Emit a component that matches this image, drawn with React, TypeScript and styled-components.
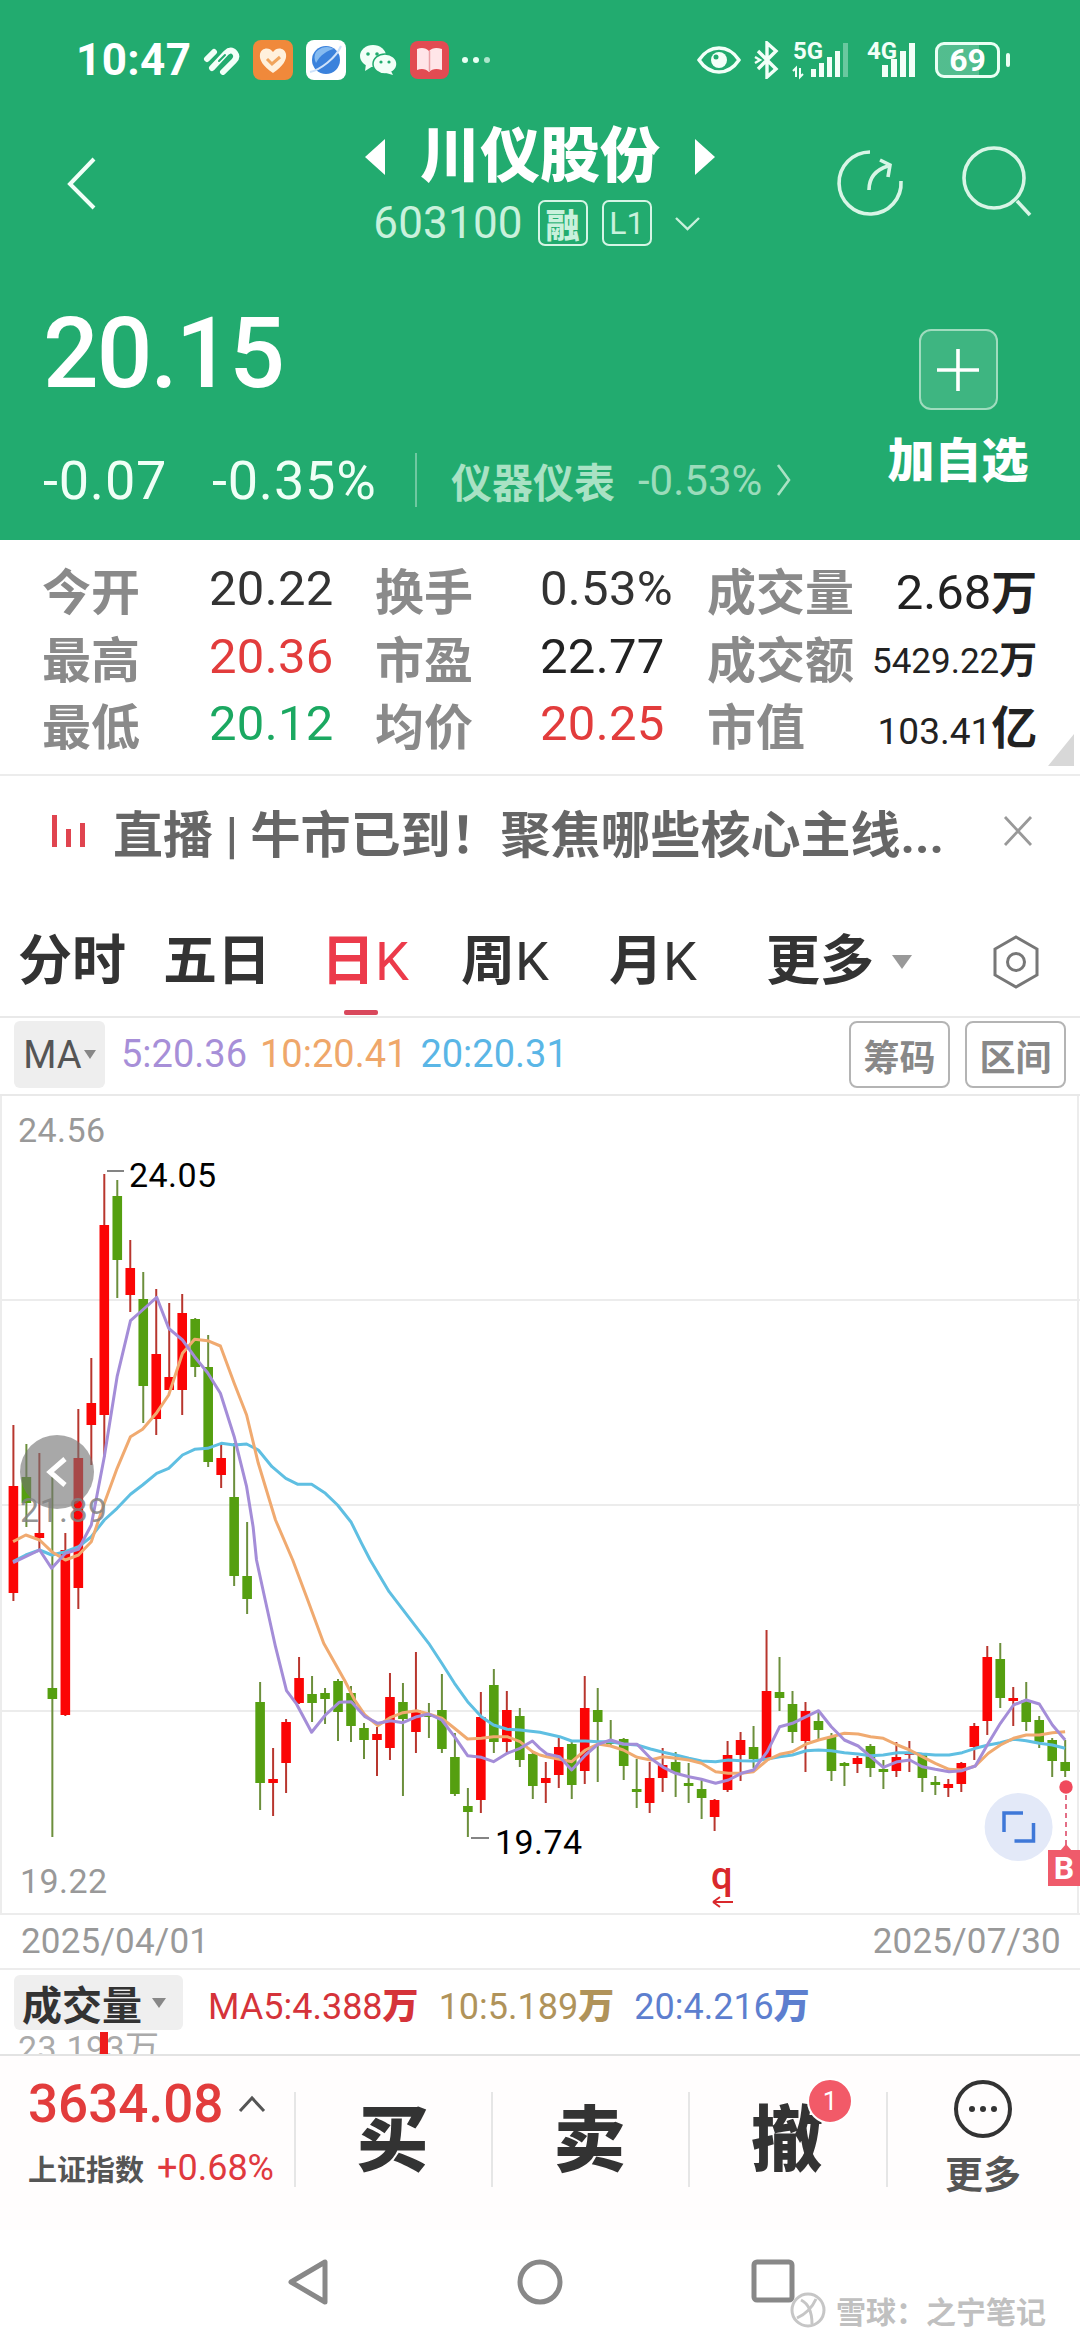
import styled, { createGlobalStyle } from "styled-components";

const GlobalStyle = createGlobalStyle`
  html, body {
    margin: 0;
    padding: 0;
    width: 1080px;
    background: #fff;
  }
  * { box-sizing: border-box; }
  body {
    font-family: Roboto, "Noto Sans CJK SC", sans-serif;
  }
`;

const Page = styled.div`
  width: 1080px;
  height: 2340px;
  overflow: hidden;
  display: flex;
  flex-direction: column;
  background: #fff;
  position: relative;
`;

/* header */
const Header = styled.header`
  height: 540px;
  background: #22ab6f;
  color: #fff;
  flex: none;
`;

const StatusBar = styled.div`
  height: 116px;
  padding: 40px 80px 0 76px;
  display: flex;
  align-items: flex-start;
  justify-content: space-between;
`;

const StatusGroup = styled.div<{ $gap: number }>`
  height: 40px;
  display: flex;
  align-items: center;
  gap: ${(p) => p.$gap}px;
`;

const Clock = styled.span`
  font-size: 44px;
  font-weight: 700;
  letter-spacing: 0.4px;
  width: 114px;
  white-space: nowrap;
`;

const Battery = styled.div`
  position: relative;
  width: 65px;
  height: 36px;
  border: 3px solid #eafff4;
  border-radius: 9px;
  background: linear-gradient(90deg, rgba(255, 255, 255, 0.22) 69%, transparent 69%);
  font-size: 32px;
  font-weight: 700;
  line-height: 30px;
  text-align: center;
  &::after {
    content: "";
    position: absolute;
    right: -13px;
    top: 8px;
    width: 4px;
    height: 14px;
    border-radius: 2px;
    background: #eafff4;
  }
`;

const TitleBar = styled.div`
  height: 134px;
  display: grid;
  grid-template-columns: 1fr auto 1fr;
  align-items: center;
`;

const BackWrap = styled.div`
  padding-left: 67px;
  display: flex;
`;

const TitleBlock = styled.div`
  display: flex;
  flex-direction: column;
  align-items: center;
`;

const TitleLine = styled.div`
  height: 76px;
  padding-top: 6px;
  display: flex;
  align-items: center;
  gap: 35px;
`;

const StockName = styled.h1`
  margin: 0;
  font-size: 60px;
  font-weight: 900;
  line-height: 70px;
  white-space: nowrap;
`;

const CodeLine = styled.div`
  height: 58px;
  padding: 4px 6px 0 0;
  display: flex;
  align-items: center;
  color: #c9f1dc;
`;

const CodeText = styled.span`
  font-size: 44px;
  letter-spacing: 0.2px;
  margin-right: 15px;
`;

const Tag = styled.span`
  width: 50px;
  height: 46px;
  border: 2px solid #d6f5e5;
  border-radius: 7px;
  margin-right: 14px;
  display: flex;
  align-items: center;
  justify-content: center;
  font-size: 34px;
  font-weight: 900;
`;

const TagLight = styled(Tag)`
  font-weight: 400;
  font-size: 32px;
  margin-right: 22px;
`;

const ActionIcons = styled.div`
  display: flex;
  justify-content: flex-end;
  align-items: center;
  gap: 55px;
  padding-right: 45px;
`;

const QuoteRow = styled.div`
  height: 290px;
  display: flex;
  justify-content: space-between;
`;

const QuoteLeft = styled.div`
  padding: 54px 0 0 43px;
`;

const Price = styled.div`
  font-size: 98px;
  line-height: 100px;
  font-weight: 500;
  letter-spacing: -2px;
`;

const ChangeRow = styled.div`
  margin-top: 48px;
  height: 56px;
  display: flex;
  align-items: center;
`;

const ChangeValue = styled.span<{ $w: number }>`
  width: ${(p) => p.$w}px;
  font-size: 54px;
  letter-spacing: 0.8px;
  color: #effff6;
  white-space: nowrap;
`;

const VSep = styled.span`
  width: 2px;
  height: 54px;
  background: rgba(255, 255, 255, 0.35);
  margin: 0 34px 0 37px;
`;

const Sector = styled.span`
  font-size: 41px;
  font-weight: 700;
  color: #a9e2c4;
  margin-right: 23px;
  white-space: nowrap;
`;

const SectorChange = styled.span`
  font-size: 42px;
  color: #9bdcbb;
  margin-right: 14px;
  white-space: nowrap;
`;

const QuoteRight = styled.div`
  width: 140px;
  margin-right: 52px;
  display: flex;
  flex-direction: column;
  align-items: center;
  padding-top: 79px;
`;

const PlusButton = styled.div`
  width: 79px;
  height: 81px;
  border: 2px solid #9fdcbe;
  border-radius: 12px;
  background: rgba(255, 255, 255, 0.13);
  display: flex;
  align-items: center;
  justify-content: center;
`;

const PlusLabel = styled.div`
  margin-top: 28px;
  font-size: 47px;
  line-height: 46px;
  font-weight: 900;
  white-space: nowrap;
`;

/* stats */
const Stats = styled.section`
  position: relative;
  flex: none;
  height: 236px;
  padding: 15px 43px 0 42px;
  border-bottom: 2px solid #ececec;
  display: grid;
  grid-template-columns: 167px 166px 165px 167px 165px 1fr;
  grid-auto-rows: 67.5px;
  align-items: center;
  &::after {
    content: "";
    position: absolute;
    right: 6px;
    bottom: 8px;
    border-style: solid;
    border-width: 0 0 32px 26px;
    border-color: transparent transparent #d8d8d8 transparent;
  }
`;

const StatLabel = styled.span`
  font-size: 49px;
  font-weight: 700;
  color: #8a8a8a;
  white-space: nowrap;
`;

const StatValue = styled.span<{ $color?: string }>`
  font-size: 49px;
  letter-spacing: 0.3px;
  color: ${(p) => p.$color || "#333"};
  white-space: nowrap;
`;

const StatEnd = styled.span<{ $size: number; $unit: number }>`
  font-size: ${(p) => p.$size}px;
  color: #222;
  text-align: right;
  white-space: nowrap;
  b {
    font-weight: 700;
    font-size: ${(p) => p.$unit}px;
  }
`;

/* live strip */
const LiveBar = styled.div`
  flex: none;
  height: 114px;
  padding: 0 47px 4px 50px;
  display: flex;
  align-items: center;
`;

const LiveText = styled.span`
  margin-left: 27px;
  font-size: 50px;
  font-weight: 700;
  color: #666;
  white-space: nowrap;
  flex: 1;
`;

/* tabs */
const Tabs = styled.nav`
  flex: none;
  height: 126px;
  padding: 18px 40px 0 18px;
  display: grid;
  grid-template-columns: 145px 158px 140px 148px 157px auto 1fr;
  align-items: center;
`;

const Tab = styled.div<{ $active?: boolean }>`
  position: relative;
  font-size: 54px;
  line-height: 60px;
  color: ${(p) => (p.$active ? "#ec3b4b" : "#333")};
  white-space: nowrap;
  b {
    font-weight: 700;
  }
  ${(p) =>
    p.$active
      ? `&::after {
    content: "";
    position: absolute;
    left: 23px;
    top: 78px;
    width: 34px;
    height: 5px;
    border-radius: 2px;
    background: #d9485c;
  }`
      : ""}
`;

const MoreTab = styled(Tab)`
  display: flex;
  align-items: center;
  gap: 18px;
`;

const Caret = styled.i<{ $w: number; $color: string }>`
  display: inline-block;
  border-style: solid;
  border-width: ${(p) => p.$w}px ${(p) => p.$w * 0.75}px 0 ${(p) => p.$w * 0.75}px;
  border-color: ${(p) => p.$color} transparent transparent transparent;
`;

const TabIcon = styled.div`
  display: flex;
  justify-content: flex-end;
`;

/* MA row */
const IndicatorRow = styled.div`
  flex: none;
  height: 80px;
  padding: 3px 14px 0 14px;
  border-top: 2px solid #e9e9e9;
  border-bottom: 2px solid #e9e9e9;
  display: flex;
  align-items: flex-start;
`;

const MaChip = styled.div`
  width: 91px;
  height: 67px;
  border-radius: 6px;
  background: #eeeeee;
  color: #555;
  font-size: 38px;
  display: flex;
  align-items: center;
  justify-content: center;
  gap: 2px;
  margin-right: 16px;
`;

const MaValue = styled.span<{ $color: string }>`
  height: 67px;
  line-height: 67px;
  margin-right: 13px;
  font-size: 38px;
  color: ${(p) => p.$color};
  white-space: nowrap;
`;

const OutlineButton = styled.div`
  width: 101px;
  height: 67px;
  border: 2px solid #b4b4b4;
  border-radius: 8px;
  color: #888;
  font-size: 36px;
  font-weight: 700;
  display: flex;
  align-items: center;
  justify-content: center;
`;

const FirstOutline = styled(OutlineButton)`
  margin-left: auto;
  margin-right: 15px;
`;

/* chart */
const ChartArea = styled.div`
  position: relative;
  flex: none;
  height: 819px;
  overflow: hidden;
  svg {
    display: block;
  }
`;

const ChartLabel = styled.span<{ $x: number; $y: number; $color: string }>`
  position: absolute;
  left: ${(p) => p.$x}px;
  top: ${(p) => p.$y - 1096}px;
  font-size: 34px;
  line-height: 36px;
  letter-spacing: 0.4px;
  color: ${(p) => p.$color};
`;

const SignalMark = styled(ChartLabel)`
  font-size: 38px;
  font-weight: 500;
`;

const ScrollKnob = styled.div`
  position: absolute;
  left: 20px;
  top: 339px;
  width: 74px;
  height: 74px;
  border-radius: 50%;
  background: rgba(115, 115, 115, 0.62);
  display: flex;
  align-items: center;
  justify-content: center;
`;

const BuyMark = styled.div`
  position: absolute;
  right: 0;
  top: 754px;
  width: 32px;
  height: 36px;
  background: #ef5b6b;
  color: #fff;
  font-size: 32px;
  font-weight: 700;
  line-height: 36px;
  text-align: center;
`;

const DateRow = styled.div`
  flex: none;
  height: 53px;
  padding: 0 19px 0 21px;
  display: flex;
  align-items: center;
  justify-content: space-between;
  font-size: 35px;
  letter-spacing: 0.2px;
  color: #999;
`;

/* volume */
const VolumeBlock = styled.div`
  position: relative;
  flex: none;
  height: 86px;
  overflow: hidden;
  padding: 5px 14px 0;
  border-top: 2px solid #ececec;
`;

const VolumeHead = styled.div`
  display: flex;
  align-items: center;
  height: 55px;
`;

const VolumeChip = styled.div`
  width: 169px;
  height: 55px;
  padding-left: 8px;
  border-radius: 6px;
  background: #efefef;
  color: #333;
  font-size: 40px;
  font-weight: 700;
  display: flex;
  align-items: center;
  gap: 10px;
  margin-right: 25px;
  white-space: nowrap;
`;

const VolumeValue = styled.span<{ $color: string }>`
  font-size: 36px;
  margin-right: 20px;
  color: ${(p) => p.$color};
  white-space: nowrap;
  b {
    font-weight: 900;
  }
`;

const VolumeTop = styled.div`
  padding-left: 4px;
  margin-top: -2px;
  font-size: 34px;
  line-height: 40px;
  letter-spacing: 0.4px;
  color: #aaa;
`;

const VolumeBar = styled.i`
  position: absolute;
  left: 100px;
  top: 62px;
  width: 8px;
  height: 24px;
  background: #ef1c1c;
`;

/* trade bar */
const TradeBar = styled.div`
  flex: none;
  height: 176px;
  border-top: 2px solid #e3e3e3;
  background: #fffdfd;
  display: grid;
  grid-template-columns: 294px 197px 197px 198px 194px;
`;

const TradeCell = styled.div<{ $divider?: boolean }>`
  position: relative;
  display: flex;
  align-items: center;
  justify-content: center;
  &::before {
    content: ${(p) => (p.$divider ? '""' : "none")};
    position: absolute;
    left: 0;
    top: 36px;
    width: 2px;
    height: 95px;
    background: #e6e6e6;
  }
`;

const TradeGlyph = styled.span`
  position: relative;
  margin-top: -4px;
  font-size: 72px;
  font-weight: 900;
  color: #333;
  line-height: 80px;
`;

const Badge = styled.span`
  position: absolute;
  top: -23px;
  right: -30px;
  width: 46px;
  height: 46px;
  border: 2px solid #fff;
  border-radius: 50%;
  background: #f25a68;
  color: #fff;
  font-size: 26px;
  font-weight: 400;
  line-height: 42px;
  text-align: center;
`;

const IndexCell = styled.div`
  padding: 24px 0 0 28px;
`;

const IndexLine = styled.div`
  display: flex;
  align-items: center;
  height: 48px;
`;

const IndexPrice = styled.span`
  font-size: 53px;
  font-weight: 500;
  color: #e23c3c;
  margin-right: 15px;
`;

const IndexSub = styled.div`
  margin-top: 21px;
  display: flex;
  align-items: center;
  height: 38px;
  white-space: nowrap;
`;

const IndexName = styled.span`
  width: 129px;
  font-size: 29px;
  font-weight: 700;
  color: #555;
`;

const IndexChange = styled.span`
  font-size: 36px;
  color: #e0393e;
`;

const MoreCell = styled(TradeCell)`
  flex-direction: column;
  justify-content: flex-start;
  padding-top: 23px;
`;

const MoreLabel = styled.span`
  margin-top: 15px;
  font-size: 38px;
  line-height: 42px;
  font-weight: 700;
  color: #555;
`;

/* system nav */
const SystemNav = styled.div`
  position: relative;
  flex: 1;
  padding: 29px 0 0 287px;
  background: #fff;
  display: flex;
  align-items: flex-start;
  gap: 188px;
`;

const Watermark = styled.div`
  position: absolute;
  left: 790px;
  top: 58px;
  display: flex;
  align-items: center;
  gap: 10px;
  font-size: 30px;
  font-weight: 700;
  color: #c0c0c0;
  text-shadow: 0 0 2px #fff;
  white-space: nowrap;
`;

type Candle = [number, number, number, number, number];

// wick top, body top, body bottom, wick bottom, 1 = red
const candles: Candle[] = [
  [1425, 1486, 1593, 1601, 1], [1444, 1477, 1503, 1527, 0], [1453, 1533, 1538, 1550, 1], [1477, 1688, 1699, 1837, 0],
  [1533, 1550, 1715, 1716, 1], [1409, 1458, 1588, 1609, 1], [1358, 1403, 1425, 1465, 1], [1174, 1225, 1415, 1457, 1],
  [1180, 1196, 1260, 1298, 0], [1240, 1268, 1295, 1312, 1], [1272, 1299, 1386, 1423, 0], [1289, 1354, 1419, 1435, 1],
  [1303, 1377, 1390, 1390, 1], [1294, 1313, 1390, 1415, 1], [1318, 1319, 1367, 1377, 0], [1335, 1367, 1462, 1467, 0],
  [1445, 1458, 1475, 1488, 1], [1443, 1497, 1576, 1586, 0], [1522, 1576, 1599, 1614, 0], [1682, 1702, 1783, 1810, 0],
  [1748, 1779, 1783, 1816, 1], [1719, 1722, 1763, 1793, 1], [1657, 1678, 1703, 1704, 1], [1676, 1694, 1703, 1722, 0],
  [1688, 1693, 1699, 1724, 0], [1679, 1681, 1712, 1741, 0], [1686, 1693, 1726, 1742, 0], [1723, 1728, 1740, 1759, 0],
  [1727, 1734, 1740, 1776, 1], [1673, 1697, 1748, 1760, 1], [1683, 1702, 1719, 1796, 0], [1652, 1710, 1732, 1753, 1],
  [1703, 1714, 1716, 1738, 0], [1674, 1710, 1749, 1753, 0], [1733, 1757, 1794, 1796, 0], [1788, 1806, 1812, 1837, 0],
  [1692, 1717, 1800, 1813, 1], [1669, 1685, 1742, 1753, 0], [1691, 1710, 1742, 1753, 1], [1708, 1716, 1760, 1767, 0],
  [1752, 1754, 1786, 1799, 0], [1762, 1778, 1783, 1803, 1], [1738, 1747, 1775, 1788, 1], [1740, 1744, 1785, 1799, 0],
  [1676, 1708, 1771, 1784, 1], [1688, 1710, 1722, 1782, 0], [1720, 1741, 1743, 1747, 0], [1738, 1739, 1766, 1780, 0],
  [1759, 1789, 1792, 1808, 0], [1762, 1778, 1803, 1813, 1], [1748, 1765, 1778, 1792, 1], [1752, 1762, 1773, 1797, 0],
  [1763, 1783, 1784, 1803, 0], [1778, 1789, 1798, 1819, 0], [1799, 1800, 1817, 1831, 1], [1741, 1755, 1790, 1792, 1],
  [1732, 1740, 1755, 1781, 1], [1726, 1747, 1759, 1768, 0], [1630, 1691, 1758, 1759, 1], [1657, 1692, 1698, 1711, 0],
  [1691, 1704, 1732, 1743, 0], [1702, 1711, 1741, 1772, 1], [1710, 1721, 1730, 1740, 0], [1733, 1737, 1771, 1781, 0],
  [1762, 1763, 1765, 1786, 0], [1756, 1758, 1764, 1773, 1], [1744, 1746, 1768, 1777, 0], [1760, 1769, 1771, 1789, 0],
  [1742, 1757, 1771, 1777, 1], [1741, 1752, 1753, 1772, 1], [1753, 1755, 1778, 1792, 0], [1776, 1782, 1785, 1795, 0],
  [1779, 1784, 1788, 1797, 1], [1762, 1763, 1784, 1792, 1], [1723, 1726, 1747, 1760, 1], [1646, 1657, 1721, 1735, 1],
  [1643, 1659, 1698, 1708, 0], [1687, 1698, 1699, 1726, 1], [1682, 1700, 1722, 1731, 0], [1716, 1720, 1742, 1748, 0],
  [1738, 1740, 1761, 1777, 0], [1740, 1762, 1771, 1777, 0],
];

const candleX = (i: number) => 13.4 + 12.985 * i;

// line points read off the reference in three crops
const toLine = (a: number[], b: number[], c: number[]) => {
  const out: string[] = [];
  for (let i = 0; i < a.length; i += 2) out.push(`${(a[i] / 2.904).toFixed(1)},${(1090 + a[i + 1] / 3).toFixed(1)}`);
  for (let i = 0; i < b.length; i += 2) out.push(`${(b[i] / 2.904).toFixed(1)},${(1560 + b[i + 1] / 3).toFixed(1)}`);
  for (let i = 0; i < c.length; i += 2) out.push(`${(540 + c[i] / 2.904).toFixed(1)},${(1560 + c[i + 1] / 3).toFixed(1)}`);
  return out.join(" ");
};

const ma5 = toLine(
  [38, 1418, 115, 1380, 150, 1435, 190, 1390, 228, 1378, 265, 1305, 303, 1100, 340, 860, 379, 692, 414, 660, 455, 622, 490, 715, 530, 750, 565, 800, 603, 848, 640, 910, 680, 1040, 716, 1190, 735, 1310],
  [745, 0, 770, 120, 800, 260, 832, 392, 860, 430, 905, 517, 945, 465, 985, 427, 1020, 425, 1060, 470, 1097, 490, 1135, 482, 1170, 488, 1210, 470, 1245, 462, 1283, 480, 1320, 530, 1358, 587, 1398, 592, 1433, 605, 1473, 580, 1510, 565, 1546, 543, 1568, 565],
  [20, 582, 57, 590, 92, 630, 132, 585, 168, 553, 205, 540, 242, 552, 282, 553, 321, 595, 358, 622, 394, 640, 432, 650, 469, 658, 510, 670, 547, 660, 585, 640, 620, 630, 660, 575, 696, 500, 733, 490, 773, 470, 809, 452, 846, 500, 884, 540, 924, 558, 960, 590, 997, 622, 1038, 605, 1074, 600, 1110, 620, 1148, 628, 1188, 635, 1226, 632, 1264, 618, 1302, 550, 1337, 490, 1375, 435, 1412, 420, 1450, 432, 1488, 495, 1525, 540]
);

const ma10 = toLine(
  [38, 1355, 75, 1335, 115, 1350, 150, 1385, 190, 1410, 228, 1395, 265, 1355, 303, 1240, 340, 1135, 379, 1040, 414, 1018, 455, 968, 490, 915, 530, 790, 565, 748, 603, 752, 640, 768, 680, 880, 716, 975, 750, 1120, 800, 1290],
  [850, 0, 890, 110, 940, 250, 1000, 360, 1030, 420, 1060, 465, 1097, 497, 1135, 472, 1170, 458, 1210, 452, 1245, 462, 1283, 475, 1320, 505, 1358, 537, 1398, 535, 1433, 530, 1473, 530, 1510, 545, 1546, 575, 1568, 585],
  [20, 590, 57, 598, 92, 605, 132, 570, 168, 552, 205, 558, 242, 570, 282, 592, 321, 600, 358, 590, 394, 595, 432, 600, 469, 610, 510, 635, 547, 640, 585, 640, 620, 635, 660, 600, 696, 583, 733, 575, 773, 552, 809, 540, 846, 530, 884, 520, 924, 522, 960, 530, 997, 535, 1038, 555, 1074, 570, 1110, 590, 1148, 610, 1188, 628, 1226, 630, 1264, 618, 1302, 580, 1337, 555, 1375, 535, 1412, 525, 1450, 525, 1488, 518, 1525, 515]
);

const ma20 = toLine(
  [38, 1415, 75, 1395, 115, 1380, 150, 1395, 190, 1385, 228, 1370, 265, 1340, 303, 1290, 340, 1255, 379, 1213, 414, 1185, 455, 1150, 490, 1135, 530, 1095, 565, 1078, 603, 1075, 643, 1060, 680, 1065, 716, 1062, 750, 1080, 790, 1130, 830, 1165, 865, 1183, 905, 1183, 945, 1210, 980, 1245, 1020, 1297, 1050, 1360],
  [1075, 0, 1130, 95, 1245, 250, 1283, 310, 1320, 370, 1358, 425, 1398, 470, 1433, 495, 1473, 508, 1510, 510, 1568, 517],
  [57, 530, 92, 543, 132, 543, 168, 545, 205, 545, 242, 552, 282, 555, 321, 567, 358, 577, 394, 585, 432, 595, 469, 603, 510, 605, 547, 600, 585, 602, 620, 603, 660, 597, 696, 590, 733, 585, 773, 572, 809, 570, 846, 572, 884, 578, 924, 582, 960, 587, 997, 585, 1038, 578, 1074, 578, 1110, 582, 1148, 585, 1188, 585, 1226, 578, 1264, 565, 1302, 555, 1337, 548, 1375, 538, 1412, 542, 1450, 550, 1488, 555, 1525, 565]
);

function KChart() {
  return (
    <svg width="1080" height="819" viewBox="0 1096 1080 819">
      <g stroke="#ececec" strokeWidth="2">
        <line x1="0" y1="1300" x2="1080" y2="1300" />
        <line x1="0" y1="1505" x2="1080" y2="1505" />
        <line x1="0" y1="1711" x2="1080" y2="1711" />
        <line x1="1" y1="1096" x2="1" y2="1915" />
        <line x1="1078" y1="1096" x2="1078" y2="1915" />
        <line x1="0" y1="1914" x2="1080" y2="1914" />
      </g>
      {candles.map(([wt, bt, bb, wb, up], i) => {
        const x = candleX(i);
        const body = up ? "#fb0505" : "#559f10";
        const wick = up ? "#b8362e" : "#6c8f3c";
        return (
          <g key={i}>
            <line x1={x} x2={x} y1={wt} y2={wb} stroke={wick} strokeWidth="2" />
            <rect x={x - 4.8} y={bt} width="9.6" height={Math.max(bb - bt, 3)} fill={body} />
          </g>
        );
      })}
      <g fill="none" strokeWidth="3" strokeLinejoin="round">
        <polyline points={ma20} stroke="#5fbfe2" />
        <polyline points={ma10} stroke="#f0aa70" />
        <polyline points={ma5} stroke="#a48dd8" />
      </g>
      <g stroke="#777" strokeWidth="1.8">
        <line x1="107" y1="1171" x2="124" y2="1171" />
        <line x1="471" y1="1838" x2="489" y2="1838" />
      </g>
      <path d="M713 1902h20M713 1902l7-5M713 1902l7 5" fill="none" stroke="#d9282c" strokeWidth="2" />
      <circle cx="1018.6" cy="1827" r="34" fill="#e3e9f8" />
      <path d="M1004 1832v-19h19M1033.5 1823v18h-19" fill="none" stroke="#3f78d8" strokeWidth="3.5" />
      <circle cx="1066" cy="1787" r="6.7" fill="#f0495c" />
      <line x1="1066" y1="1795" x2="1066" y2="1845" stroke="#e0607a" strokeWidth="1.8" strokeDasharray="5 4" />
      <path d="M1060 1851l6-7 6 7z" fill="#ef5b6b" />
    </svg>
  );
}

function App() {
  return (
    <Page>
      <GlobalStyle />
      <Header>
        <StatusBar>
          <StatusGroup $gap={13}>
            <Clock>10:47</Clock>
            <svg width="37" height="30" viewBox="0 0 37 30" fill="none" stroke="#f2fff8" strokeWidth="6" strokeLinecap="round">
              <path d="M4 14l7-7" />
              <path d="M9 23L23 8q5-5 9 0 3 4-1 8L20 27" />
              <path d="M16 16l6-6" stroke="#22ab6f" strokeWidth="2" />
            </svg>
            <svg width="40" height="40" viewBox="0 0 40 40">
              <rect width="40" height="40" rx="8" fill="#f0893b" />
              <path d="M20 33C10 26 6 20 7 14c1-6 9-8 13-2 4-6 12-4 13 2 1 6-3 12-13 19z" fill="#fff0dc" />
              <path d="M14 19l5 5 8-7" fill="none" stroke="#f0a45c" strokeWidth="3" />
            </svg>
            <svg width="40" height="40" viewBox="0 0 40 40">
              <rect width="40" height="40" rx="8" fill="#fff" />
              <circle cx="20" cy="20" r="14" fill="#3b82dc" />
              <path d="M10 12a14 14 0 0 1 18-3c-6 1-14 6-18 14-2-4-2-8 0-11z" fill="#86bbf0" />
              <path d="M4 32C14 30 30 18 35 6" fill="none" stroke="#cfe2fa" strokeWidth="2" />
            </svg>
            <svg width="38" height="30" viewBox="0 0 38 30" fill="#f2fff8">
              <ellipse cx="14" cy="11" rx="13" ry="11" />
              <path d="M7 19l-1 7 8-5z" />
              <ellipse cx="26" cy="19" rx="12" ry="10" stroke="#22ab6f" strokeWidth="1.5" />
              <path d="M32 26l2 4-7-2z" />
              <circle cx="9" cy="9" r="1.8" fill="#22ab6f" />
              <circle cx="18" cy="9" r="1.8" fill="#22ab6f" />
              <circle cx="22" cy="17" r="1.6" fill="#22ab6f" />
              <circle cx="30" cy="17" r="1.6" fill="#22ab6f" />
            </svg>
            <svg width="39" height="38" viewBox="0 0 39 38">
              <rect width="39" height="38" rx="8" fill="#e24b52" />
              <path d="M7 8c5-2 9-1 12 2 3-3 7-4 13-2v21c-6-2-10-1-13 2-3-3-7-4-12-2z" fill="#ffe5e8" />
              <line x1="19.5" y1="10" x2="19.5" y2="30" stroke="#e9a0a6" strokeWidth="1.5" />
            </svg>
            <svg width="28" height="8" viewBox="0 0 28 8" fill="#e8fff3">
              <circle cx="3" cy="4" r="3" />
              <circle cx="14" cy="4" r="3" />
              <circle cx="25" cy="4" r="3" opacity="0.7" />
            </svg>
          </StatusGroup>
          <StatusGroup $gap={12}>
            <svg width="44" height="28" viewBox="0 0 44 28" fill="none">
              <path d="M2 14C8 5 15 2 22 2s14 3 20 12c-6 9-13 12-20 12S8 23 2 14z" stroke="#f2fff8" strokeWidth="3.4" />
              <circle cx="22" cy="14" r="8" fill="#f2fff8" />
              <circle cx="19" cy="11" r="2.5" fill="#22ab6f" />
            </svg>
            <svg width="28" height="38" viewBox="0 0 28 38" fill="none" stroke="#f2fff8" strokeWidth="3.4">
              <path d="M5 10l18 18-9 8V2l9 8L5 28" />
              <path d="M2 16l5 3-5 3" strokeWidth="2.4" />
            </svg>
            <svg width="62" height="38" viewBox="0 0 62 38" overflow="visible">
              <text x="0" y="18" fontFamily="Roboto" fontSize="24" fontWeight="700" fill="#f2fff8">5G</text>
              <path d="M3 36v-9l-3 3M7 27v9l3-3" stroke="#f2fff8" strokeWidth="2" fill="none" />
              <g fill="#f2fff8">
                <rect x="18" y="28" width="5" height="8" />
                <rect x="26" y="22" width="5" height="14" />
                <rect x="34" y="16" width="5" height="20" />
                <rect x="42" y="10" width="5" height="26" />
                <rect x="50" y="2" width="5" height="34" opacity="0.35" />
              </g>
            </svg>
            <svg width="56" height="38" viewBox="0 0 56 38" overflow="visible">
              <text x="0" y="18" fontFamily="Roboto" fontSize="24" fontWeight="700" fill="#f2fff8">4G</text>
              <g fill="#f2fff8">
                <rect x="15" y="24" width="6" height="12" />
                <rect x="24" y="18" width="6" height="18" />
                <rect x="33" y="10" width="6" height="26" />
                <rect x="42" y="2" width="6" height="34" />
              </g>
            </svg>
            <Battery>69</Battery>
          </StatusGroup>
        </StatusBar>

        <TitleBar>
          <BackWrap>
            <svg width="29" height="53" viewBox="0 0 29 53" fill="none" stroke="#f2fff8" strokeWidth="4">
              <path d="M27 2L3 27l24 24" />
            </svg>
          </BackWrap>
          <TitleBlock>
            <TitleLine>
              <svg width="20" height="36" viewBox="0 0 20 36" fill="#fff">
                <path d="M20 0v36L0 18z" />
              </svg>
              <StockName>川仪股份</StockName>
              <svg width="20" height="36" viewBox="0 0 20 36" fill="#fff">
                <path d="M0 0v36l20-18z" />
              </svg>
            </TitleLine>
            <CodeLine>
              <CodeText>603100</CodeText>
              <Tag>融</Tag>
              <TagLight>L1</TagLight>
              <svg width="27" height="15" viewBox="0 0 27 15" fill="none" stroke="#c9f1dc" strokeWidth="2.4">
                <path d="M2 2l11.500 11L25 2" />
              </svg>
            </CodeLine>
          </TitleBlock>
          <ActionIcons>
            <svg width="70" height="70" viewBox="0 0 70 70" fill="none" stroke="#d8f5e6" strokeWidth="3.6">
              <path d="M35 4A31 31 0 1 0 66 33" />
              <path d="M34 42C34 30 40 22 53 18" />
              <path d="M45 12l10 5-2 12" />
            </svg>
            <svg width="75" height="75" viewBox="0 0 75 75" fill="none" stroke="#d8f5e6" strokeWidth="3.6">
              <circle cx="34" cy="32" r="30" />
              <path d="M57 55l13 14" />
            </svg>
          </ActionIcons>
        </TitleBar>

        <QuoteRow>
          <QuoteLeft>
            <Price>20.15</Price>
            <ChangeRow>
              <ChangeValue $w={169}>-0.07</ChangeValue>
              <ChangeValue $w={166}>-0.35%</ChangeValue>
              <VSep />
              <Sector>仪器仪表</Sector>
              <SectorChange>-0.53%</SectorChange>
              <svg width="15" height="34" viewBox="0 0 15 34" fill="none" stroke="#a9e2c4" strokeWidth="2.6">
                <path d="M2 2l11 15L2 32" />
              </svg>
            </ChangeRow>
          </QuoteLeft>
          <QuoteRight>
            <PlusButton>
              <svg width="42" height="42" viewBox="0 0 42 42" stroke="#fff" strokeWidth="3.6">
                <path d="M21 0v42M0 21h42" />
              </svg>
            </PlusButton>
            <PlusLabel>加自选</PlusLabel>
          </QuoteRight>
        </QuoteRow>
      </Header>

      <Stats>
        <StatLabel>今开</StatLabel>
        <StatValue>20.22</StatValue>
        <StatLabel>换手</StatLabel>
        <StatValue>0.53%</StatValue>
        <StatLabel>成交量</StatLabel>
        <StatEnd $size={49} $unit={46}>2.68<b>万</b></StatEnd>
        <StatLabel>最高</StatLabel>
        <StatValue $color="#e23c3c">20.36</StatValue>
        <StatLabel>市盈</StatLabel>
        <StatValue $color="#222">22.77</StatValue>
        <StatLabel>成交额</StatLabel>
        <StatEnd $size={35} $unit={38}>5429.22<b>万</b></StatEnd>
        <StatLabel>最低</StatLabel>
        <StatValue $color="#1ba861">20.12</StatValue>
        <StatLabel>均价</StatLabel>
        <StatValue $color="#e23c3c">20.25</StatValue>
        <StatLabel>市值</StatLabel>
        <StatEnd $size={37} $unit={46}>103.41<b>亿</b></StatEnd>
      </Stats>

      <LiveBar>
        <svg width="36" height="32" viewBox="0 0 36 32" fill="#e0444f">
          <rect x="2" width="5" height="32" />
          <rect x="16" y="14" width="5" height="18" />
          <rect x="30" y="8" width="5" height="24" />
        </svg>
        <LiveText>直播 | 牛市已到！聚焦哪些核心主线...</LiveText>
        <svg width="30" height="32" viewBox="0 0 30 32" fill="none" stroke="#999" strokeWidth="2.8">
          <path d="M2 2l26 28M28 2L2 30" />
        </svg>
      </LiveBar>

      <Tabs>
        <Tab><b>分时</b></Tab>
        <Tab><b>五日</b></Tab>
        <Tab $active><b>日</b>K</Tab>
        <Tab><b>周</b>K</Tab>
        <Tab><b>月</b>K</Tab>
        <MoreTab>
          <b>更多</b>
          <Caret $w={14} $color="#999" />
        </MoreTab>
        <TabIcon>
          <svg width="48" height="54" viewBox="0 0 48 54" fill="none" stroke="#777" strokeWidth="3">
            <path d="M24 2l21 12v26L24 52 3 40V14z" />
            <circle cx="24" cy="27" r="8.500" />
          </svg>
        </TabIcon>
      </Tabs>

      <IndicatorRow>
        <MaChip>
          MA
          <Caret $w={9} $color="#888" />
        </MaChip>
        <MaValue $color="#a78fd8">5:20.36</MaValue>
        <MaValue $color="#efa76a">10:20.41</MaValue>
        <MaValue $color="#5ab6e6">20:20.31</MaValue>
        <FirstOutline>筹码</FirstOutline>
        <OutlineButton>区间</OutlineButton>
      </IndicatorRow>

      <ChartArea>
        <KChart />
        <ChartLabel $x={18} $y={1112} $color="#999">24.56</ChartLabel>
        <ChartLabel $x={129} $y={1157} $color="#000">24.05</ChartLabel>
        <ChartLabel $x={495} $y={1824} $color="#000">19.74</ChartLabel>
        <ChartLabel $x={20} $y={1863} $color="#999">19.22</ChartLabel>
        <ScrollKnob>
          <svg width="22" height="32" viewBox="0 0 22 32" fill="none" stroke="#fff" strokeWidth="5">
            <path d="M19 3L4 16l15 13" />
          </svg>
        </ScrollKnob>
        <ChartLabel $x={20} $y={1492} $color="rgba(130,130,130,0.85)">21.89</ChartLabel>
        <SignalMark $x={711} $y={1858} $color="#d9282c">q</SignalMark>
        <BuyMark>B</BuyMark>
      </ChartArea>

      <DateRow>
        <span>2025/04/01</span>
        <span>2025/07/30</span>
      </DateRow>

      <VolumeBlock>
        <VolumeHead>
          <VolumeChip>
            成交量
            <Caret $w={10} $color="#888" />
          </VolumeChip>
          <VolumeValue $color="#d5333a">MA5:4.388<b>万</b></VolumeValue>
          <VolumeValue $color="#b0935a">10:5.189<b>万</b></VolumeValue>
          <VolumeValue $color="#5d7fcf">20:4.216<b>万</b></VolumeValue>
        </VolumeHead>
        <VolumeTop>23.193万</VolumeTop>
        <VolumeBar />
      </VolumeBlock>

      <TradeBar>
        <IndexCell>
          <IndexLine>
            <IndexPrice>3634.08</IndexPrice>
            <svg width="28" height="18" viewBox="0 0 28 18" fill="none" stroke="#555" strokeWidth="3">
              <path d="M2 16L14 3l12 13" />
            </svg>
          </IndexLine>
          <IndexSub>
            <IndexName>上证指数</IndexName>
            <IndexChange>+0.68%</IndexChange>
          </IndexSub>
        </IndexCell>
        <TradeCell $divider>
          <TradeGlyph>买</TradeGlyph>
        </TradeCell>
        <TradeCell $divider>
          <TradeGlyph>卖</TradeGlyph>
        </TradeCell>
        <TradeCell $divider>
          <TradeGlyph>
            撤
            <Badge>1</Badge>
          </TradeGlyph>
        </TradeCell>
        <MoreCell $divider>
          <svg width="60" height="60" viewBox="0 0 60 60">
            <circle cx="30" cy="30" r="27" fill="none" stroke="#333" strokeWidth="4" />
            <circle cx="19" cy="30" r="3" fill="#333" />
            <circle cx="30" cy="30" r="3" fill="#333" />
            <circle cx="41" cy="30" r="3" fill="#333" />
          </svg>
          <MoreLabel>更多</MoreLabel>
        </MoreCell>
      </TradeBar>

      <SystemNav>
        <svg width="42" height="46" viewBox="0 0 42 46" fill="none" stroke="#888" strokeWidth="5" strokeLinejoin="round">
          <path d="M38 3v40L4 23z" />
        </svg>
        <svg width="46" height="46" viewBox="0 0 46 46" fill="none" stroke="#888" strokeWidth="5">
          <circle cx="23" cy="23" r="20" />
        </svg>
        <svg width="44" height="44" viewBox="0 0 44 44" fill="none" stroke="#888" strokeWidth="5">
          <rect x="3" y="3" width="38" height="38" rx="3" />
        </svg>
        <Watermark>
          <svg width="36" height="36" viewBox="0 0 36 36" fill="none" stroke="#c6c6c6" strokeWidth="3">
            <circle cx="18" cy="18" r="16" />
            <path d="M11 8c8 4 11 12 11 24M26 7C22 16 16 22 7 26" />
          </svg>
          雪球：之宁笔记
        </Watermark>
      </SystemNav>
    </Page>
  );
}

export default App;
